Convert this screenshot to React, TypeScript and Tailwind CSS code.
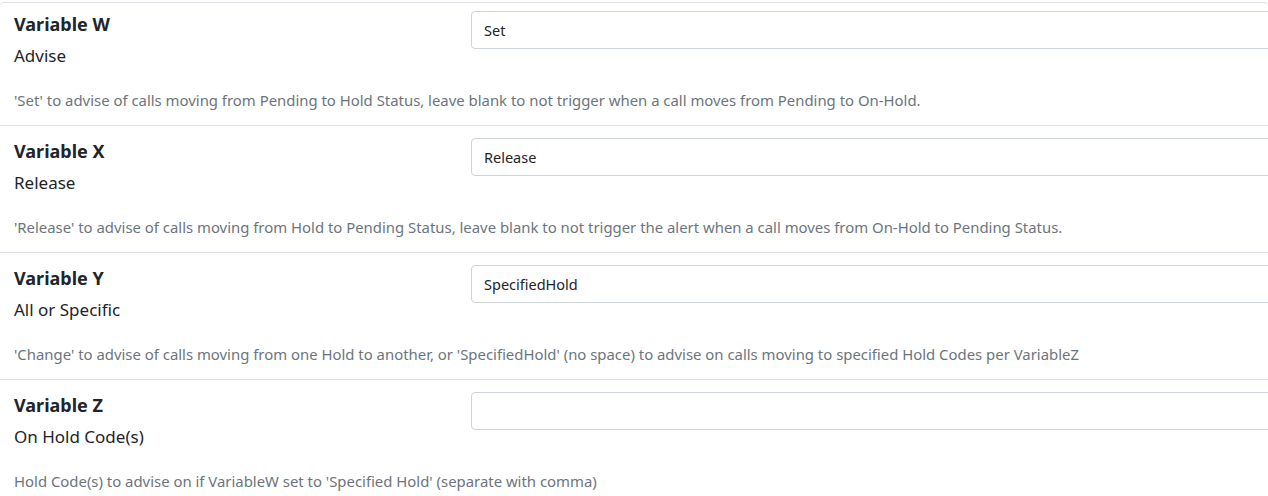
import React from "react"

interface Setting {
  title: string;
  label: string;
  value: string;
  help: string;
}

const settings: Setting[] = [
  {
    title: "Variable W",
    label: "Advise",
    value: "Set",
    help: "'Set' to advise of calls moving from Pending to Hold Status, leave blank to not trigger when a call moves from Pending to On-Hold.",
  },
  {
    title: "Variable X",
    label: "Release",
    value: "Release",
    help: "'Release' to advise of calls moving from Hold to Pending Status, leave blank to not trigger the alert when a call moves from On-Hold to Pending Status.",
  },
  {
    title: "Variable Y",
    label: "All or Specific",
    value: "SpecifiedHold",
    help: "'Change' to advise of calls moving from one Hold to another, or 'SpecifiedHold' (no space) to advise on calls moving to specified Hold Codes per VariableZ",
  },
  {
    title: "Variable Z",
    label: "On Hold Code(s)",
    value: "",
    help: "Hold Code(s) to advise on if VariableW set to 'Specified Hold' (separate with comma)",
  },
]

export default function App() {
  return (
    <div
      className="w-[1268px] h-[496px] overflow-hidden bg-white text-[#212529]"
      style={{ fontFamily: '"Noto Sans", "Open Sans", sans-serif' }}
    >
      <div className="mt-[2px] border-t border-[#dee2e6] rounded-t-[4px]">
        {settings.map((s, i) => (
          <div
            key={s.title}
            className={
              i === 0
                ? "h-[122px] pt-[8px]"
                : "h-[127px] pt-[12px] border-t border-[#dee2e6]"
            }
          >
            <div className="flex">
              <div className="w-[471px] shrink-0 pl-[14px]">
                <div className="mt-[2px] text-[18px] leading-[22px] font-bold">{s.title}</div>
                <div className="mt-[8px] text-[17px] leading-[25px]">{s.label}</div>
              </div>
              <input
                type="text"
                defaultValue={s.value}
                className="w-[820px] shrink-0 h-[38px] px-[12px] text-[14.5px] text-[#212529] border border-[#ced4da] rounded-[4px] outline-none"
              />
            </div>
            <p className="mt-[21px] pl-[14px] text-[14.9px] leading-[22px] text-[#6c757d] whitespace-nowrap">
              {s.help}
            </p>
          </div>
        ))}
      </div>
    </div>
  )
}
